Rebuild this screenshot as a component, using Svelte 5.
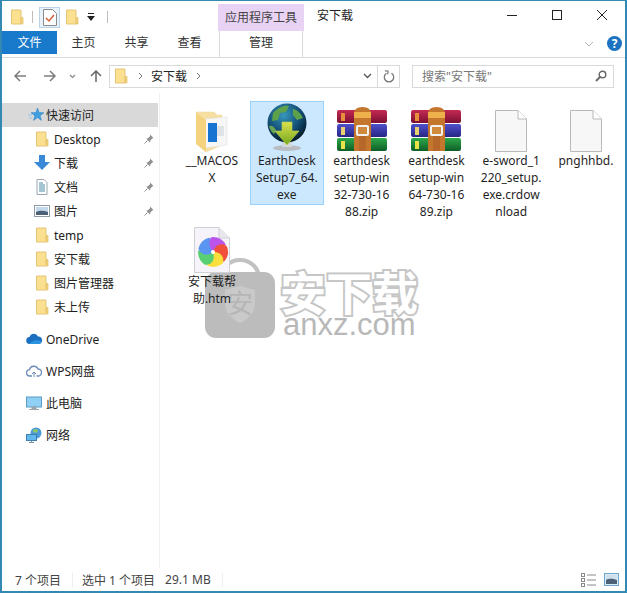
<script>
  const tabs = ["主页", "共享", "查看"];

  const pinned = [
    { name: "Desktop", icon: "folder" },
    { name: "下载", icon: "down" },
    { name: "文档", icon: "doc" },
    { name: "图片", icon: "pic" }
  ];
  const quick = ["temp", "安下载", "图片管理器", "未上传"];

  const items = [
    { icon: "macos", lines: ["__MACOS", "X"] },
    { icon: "globe", lines: ["EarthDesk", "Setup7_64.", "exe"], selected: true },
    { icon: "rar", lines: ["earthdesk", "setup-win", "32-730-16", "88.zip"] },
    { icon: "rar", lines: ["earthdesk", "setup-win", "64-730-16", "89.zip"] },
    { icon: "file", lines: ["e-sword_1", "220_setup.", "exe.crdow", "nload"] },
    { icon: "file", lines: ["pnghhbd."] },
    { icon: "htm", lines: ["安下载帮", "助.htm"] }
  ];

  const petals = ["#bb55ea", "#f0503a", "#fae03c", "#58cf72", "#5a95f2"];
</script>

{#snippet folder()}
  <svg class="ico" width="16" height="16" viewBox="0 0 16 16">
    <path d="M2.500 1h9.500v14H2.500z" fill="#fbe08f" stroke="#e3c577" />
    <path d="M12 8.500h2V15h-2z" fill="#f3cf74" stroke="#e3c577" stroke-width=".8" />
  </svg>
{/snippet}

{#snippet pin()}
  <svg class="pin" width="10" height="10" viewBox="0 0 10 10">
    <path d="M6 .5l3.500 3.500-1.200.6-2 2-.3 1.800L2.200 4.600 4 4.300l2-2z" fill="#8f8f8f" />
    <path d="M3.500 6.500L.5 9.500" stroke="#8f8f8f" />
  </svg>
{/snippet}

{#snippet navicon(kind)}
  {#if kind === "folder"}
    {@render folder()}
  {:else if kind === "down"}
    <svg class="ico" width="16" height="16" viewBox="0 0 16 16">
      <path d="M5 0h6v7h5l-8 8-8-8h5z" fill="#3a88d8" />
    </svg>
  {:else if kind === "doc"}
    <svg class="ico" width="16" height="16" viewBox="0 0 16 16">
      <path d="M3 .5h7l3 3v12H3z" fill="#fff" stroke="#9aa7b2" />
      <path d="M5 4h4M5 6h6M5 8h6M5 10h6M5 12h6" stroke="#4d8aa8" />
    </svg>
  {:else}
    <svg class="ico" width="16" height="16" viewBox="0 0 16 16">
      <rect x=".5" y="2.500" width="15" height="11" fill="#fff" stroke="#8f9aa5" />
      <rect x="2" y="4" width="12" height="8" fill="#c3d8ea" />
      <path d="M2 9c4-2 8-1 12 0v3H2z" fill="#4c6076" />
    </svg>
  {/if}
{/snippet}

{#snippet bigicon(kind)}
  {#if kind === "macos"}
    <svg width="32" height="41" viewBox="0 0 32 41">
      <path d="M0 1h18l3 3h5v30L10 41 0 32z" fill="#f5dfa2" stroke="#eed79a" stroke-width=".5" />
      <path d="M9 8l22-2v28L9 37z" fill="#f6f6f6" stroke="#e2e2e2" stroke-width=".6" />
      <rect x="12" y="12" width="9" height="19" fill="#1673d2" />
      <rect x="21" y="15" width="7" height="10" fill="#dfe3e6" />
      <path d="M0 2l10 7v32L0 33z" fill="#f4d27e" />
    </svg>
  {:else if kind === "globe"}
    <svg width="48" height="50" viewBox="0 0 48 50">
      <defs>
        <radialGradient id="globe-fill" cx=".42" cy=".3" r=".75">
          <stop offset="0" stop-color="#3797bd" />
          <stop offset=".6" stop-color="#124a70" />
          <stop offset="1" stop-color="#031018" />
        </radialGradient>
        <linearGradient id="arrow-fill" x1="0" y1="0" x2="0" y2="1">
          <stop offset="0" stop-color="#dbe04e" />
          <stop offset="1" stop-color="#72a81c" />
        </linearGradient>
      </defs>
      <ellipse cx="24" cy="46" rx="14" ry="3" fill="#b9bdc1" />
      <path d="M19 39h10v6H19z" fill="#d5d8db" />
      <circle cx="24" cy="21" r="19.500" fill="url(#globe-fill)" />
      <path d="M10 11c6-6 11-8 16-7l-3 6-6 1-2 7-6 1zM30 7c5 1 8 5 10 9l-6 2-4-5z" fill="#5da24a" />
      <path d="M6 24c3-1 6 1 7 5l-2 3c-3-2-4-5-5-8z" fill="#6aa456" />
      <path d="M19 20h10v9h7L24 43 12 29h7z" fill="url(#arrow-fill)" stroke="#bfce4c" stroke-width=".6" />
    </svg>
  {:else if kind === "rar"}
    <svg width="50" height="45" viewBox="0 0 50 45">
      <defs>
        <linearGradient id="band-red" x1="0" y1="0" x2="0" y2="1">
          <stop offset="0" stop-color="#c42a52" />
          <stop offset="1" stop-color="#7c0f33" />
        </linearGradient>
        <linearGradient id="band-blue" x1="0" y1="0" x2="0" y2="1">
          <stop offset="0" stop-color="#5050cc" />
          <stop offset="1" stop-color="#262684" />
        </linearGradient>
        <linearGradient id="band-green" x1="0" y1="0" x2="0" y2="1">
          <stop offset="0" stop-color="#2ea84a" />
          <stop offset="1" stop-color="#0d5e26" />
        </linearGradient>
      </defs>
      <rect y="3" width="50" height="13" rx="2" fill="url(#band-red)" />
      <rect y="17" width="50" height="13" rx="2" fill="url(#band-blue)" />
      <rect y="31" width="50" height="13" rx="2" fill="url(#band-green)" />
      <rect x="4" y="6" width="4" height="8" fill="#e88f3c" />
      <rect x="4" y="20" width="4" height="8" fill="#e8cf72" />
      <rect x="4" y="34" width="4" height="8" fill="#e8e24a" />
      <path d="M17 7q0-7 8.500-7T34 7v37H17z" fill="#c4762c" />
      <rect x="17" y="5" width="17" height="6" fill="#eeb04a" />
      <rect x="20" y="19" width="11" height="9" rx="1" fill="#d08a3e" stroke="#f2f2f2" stroke-width="2" />
      <rect x="22" y="29" width="7" height="15" fill="#b5682a" />
    </svg>
  {:else if kind === "file"}
    <svg width="32" height="42" viewBox="0 0 32 42">
      <path d="M.5.500H23L31.500 9v32.500H.500z" fill="#f7f7f7" stroke="#b9b9b9" />
      <path d="M23 .5V9h8.500" fill="#fff" stroke="#b9b9b9" />
    </svg>
  {:else if kind === "htm"}
    <svg width="36" height="46" viewBox="0 0 36 46">
      <path d="M.5.500H25L35.500 11v34.500H.500z" fill="#f6f4fa" stroke="#cfcfd6" />
      <path d="M25 .5V11h10.500" fill="#e8e8ec" stroke="#cfcfd6" />
      {#each petals as color, i}
        <path d="M19 25C13 21 12 14 18 10A15 15 0 0 1 32 18C27 18 22 20 19 25z" fill={color} transform="rotate({i * 72} 19 25)" />
      {/each}
      <circle cx="19" cy="25" r="2" fill="#fff" />
    </svg>
  {/if}
{/snippet}

<div class="window">
  <div class="titlebar">
    <div class="qat">
      {@render folder()}
      <span class="sep"></span>
      <span class="qat-btn">
        <svg width="14" height="17" viewBox="0 0 14 17">
          <path d="M.5.500h9l4 4v12H.500z" fill="#fff" stroke="#8a8a8a" />
          <path d="M3 9l3 3 5-6" fill="none" stroke="#d2603a" stroke-width="1.500" />
        </svg>
      </span>
      {@render folder()}
      <svg class="drop" width="8" height="9" viewBox="0 0 8 9">
        <path d="M1 0h6v1H1zM0 3h8L4 8z" fill="#222" />
      </svg>
      <span class="sep"></span>
    </div>
    <div class="ctx-tab">应用程序工具</div>
    <div class="title">安下载</div>
    <div class="controls">
      <svg width="12" height="12" viewBox="0 0 12 12"><path d="M1 6.500h10" stroke="#222" /></svg>
      <svg width="12" height="12" viewBox="0 0 12 12"><rect x="1.500" y="1.500" width="9" height="9" fill="none" stroke="#222" /></svg>
      <svg width="12" height="12" viewBox="0 0 12 12"><path d="M1 1l10 10M11 1L1 11" stroke="#222" /></svg>
    </div>
  </div>

  <div class="ribbon">
    <div class="file-tab">文件</div>
    {#each tabs as tab}
      <div class="tab">{tab}</div>
    {/each}
    <div class="tab manage">管理</div>
    <svg class="collapse" width="10" height="6" viewBox="0 0 10 6">
      <path d="M1 1l4 4 4-4" fill="none" stroke="#b5b5b5" />
    </svg>
    <div class="help">?</div>
  </div>

  <div class="addressrow">
    <svg class="arrow" width="14" height="14" viewBox="0 0 14 14"><path d="M13 7H2M7 2L2 7l5 5" fill="none" stroke="#7d7d7d" stroke-width="1.500" /></svg>
    <svg class="arrow fwd" width="14" height="14" viewBox="0 0 14 14"><path d="M1 7h11M7 2l5 5-5 5" fill="none" stroke="#7d7d7d" stroke-width="1.500" /></svg>
    <svg class="recent" width="7" height="5" viewBox="0 0 7 5"><path d="M1 1l2.500 2.500L6 1" fill="none" stroke="#888" stroke-width="1.200" /></svg>
    <svg class="arrow up" width="14" height="14" viewBox="0 0 14 14"><path d="M7 13V2M2 7l5-5 5 5" fill="none" stroke="#666" stroke-width="1.500" /></svg>
    <div class="addr">
      {@render folder()}
      <svg class="crumb" width="5" height="8" viewBox="0 0 5 8"><path d="M1 1l3 3-3 3" fill="none" stroke="#777" /></svg>
      <span class="crumb-text">安下载</span>
      <svg class="crumb" width="5" height="8" viewBox="0 0 5 8"><path d="M1 1l3 3-3 3" fill="none" stroke="#777" /></svg>
      <svg class="addr-drop" width="9" height="6" viewBox="0 0 9 6"><path d="M1 1l3.500 3.500L8 1" fill="none" stroke="#555" stroke-width="1.300" /></svg>
      <span class="addr-refresh">
        <svg width="12" height="13" viewBox="0 0 12 13">
          <path d="M8.500 3.200A4.700 4.700 0 1 1 3.500 3.200" fill="none" stroke="#777" stroke-width="1.300" />
          <path d="M2 0.800l3 .2-.2 3.200" fill="none" stroke="#777" stroke-width="1.200" />
        </svg>
      </span>
    </div>
    <div class="search">
      <span>搜索"安下载"</span>
      <svg width="12" height="12" viewBox="0 0 12 12">
        <circle cx="7.500" cy="4.500" r="3.300" fill="none" stroke="#666" stroke-width="1.400" />
        <path d="M5 7l-4 4" stroke="#666" stroke-width="1.800" />
      </svg>
    </div>
  </div>

  <div class="main">
    <nav class="sidebar">
      <div class="row head">
        <svg class="ico" width="16" height="16" viewBox="0 0 16 16">
          <path d="M9.500 1l1.600 4.600 4.900.1-3.900 3 1.400 4.700-4-2.800-4 2.800 1.400-4.700-3.900-3 4.900-.1z" fill="#3f9fe0" stroke="#2b7fc0" stroke-width=".5" />
          <path d="M0 8h4M1 11h3" stroke="#8cc3ea" />
        </svg>
        <span>快速访问</span>
      </div>
      {#each pinned as item}
        <div class="row sub">
          {@render navicon(item.icon)}
          <span>{item.name}</span>
          {@render pin()}
        </div>
      {/each}
      {#each quick as name}
        <div class="row sub">
          {@render folder()}
          <span>{name}</span>
        </div>
      {/each}

      <div class="row top">
        <svg class="ico" width="16" height="16" viewBox="0 0 16 16">
          <path d="M4 13a3.500 3.500 0 0 1-.5-7A4.500 4.500 0 0 1 12 5.500 3.500 3.500 0 0 1 12.500 13z" fill="#1a6fc0" />
          <path d="M3 13c3-3 7-5 12-3 1 2 0 3-2.500 3z" fill="#2c93e0" />
        </svg>
        <span>OneDrive</span>
      </div>
      <div class="row top">
        <svg class="ico" width="16" height="16" viewBox="0 0 16 16">
          <path d="M4 13a3.200 3.200 0 0 1-.5-6.400A4.500 4.500 0 0 1 12 6a3.500 3.500 0 0 1 0 7h-1.500M6 13H4" fill="none" stroke="#6d8db8" stroke-width="1.300" />
          <path d="M8 9v5M6 11l2-2 2 2" fill="none" stroke="#6d8db8" />
        </svg>
        <span>WPS网盘</span>
      </div>
      <div class="row top">
        <svg class="ico" width="16" height="16" viewBox="0 0 16 16">
          <rect x=".5" y="2" width="15" height="10" fill="#8fd0f4" stroke="#5c9cc4" />
          <path d="M6 12h4v2H6zM3 14.500h10" fill="#9aa5ad" stroke="#9aa5ad" />
        </svg>
        <span>此电脑</span>
      </div>
      <div class="row top">
        <svg class="ico" width="16" height="16" viewBox="0 0 16 16">
          <circle cx="10" cy="6" r="5.500" fill="#4a9bd8" />
          <path d="M7 3c2-2 5-1 5 1s-3 2-5 1z" fill="#8cc46a" />
          <rect x=".5" y="7.500" width="10" height="6" fill="#5fb7ec" stroke="#3c7fb0" />
          <path d="M5.500 14v2M3 15.500h5" stroke="#7a95a8" />
        </svg>
        <span>网络</span>
      </div>
    </nav>

    <div class="files">
      {#each items as item}
        <div class="item" class:selected={item.selected}>
          <div class="icon">{@render bigicon(item.icon)}</div>
          {#each item.lines as line}
            <div class="line">{line}</div>
          {/each}
        </div>
      {/each}
    </div>

    <div class="watermark">
      <div class="bag">
        <svg width="70" height="80" viewBox="0 0 70 80">
          <path d="M16 16V20a19 18 0 0 1 38 0v-4" fill="none" stroke="#c2c2c2" stroke-width="4" />
          <rect y="14" width="70" height="66" rx="11" fill="#bcbcbc" />
          <path d="M35 28l15 4v14c0 9-7 15-15 19-8-4-15-10-15-19V32z" fill="#c9c9c9" />
        </svg>
        <span class="shield-text">安</span>
      </div>
      <div class="wm-text">
        <div class="wm-cn">安下载</div>
        <div class="wm-en">anxz.com</div>
      </div>
    </div>
  </div>

  <div class="status">
    <span>7 个项目</span>
    <span class="bar"></span>
    <span>选中 1 个项目</span>
    <span class="size">29.1 MB</span>
    <span class="bar"></span>
    <svg class="view-a" width="16" height="14" viewBox="0 0 16 14">
      <rect x=".5" y=".5" width="3" height="3" fill="#fff" stroke="#8a8a8a" />
      <rect x=".5" y="5.500" width="3" height="3" fill="#fff" stroke="#8a8a8a" />
      <rect x=".5" y="10.500" width="3" height="3" fill="#fff" stroke="#8a8a8a" />
      <path d="M6 2h9M6 7h9M6 12h9" stroke="#8a8a8a" />
    </svg>
    <svg class="view-b" width="15" height="13" viewBox="0 0 15 13">
      <rect x=".5" y=".5" width="14" height="12" fill="#d9ebf7" stroke="#6fa7cc" />
      <rect x="2" y="2" width="11" height="9" fill="#cfe0ec" />
      <path d="M2 7c4-2 7-1 11 0v4H2z" fill="#4c6076" />
    </svg>
  </div>
</div>

<style>
  :global(body) {
    background: #fff;
  }
  .window {
    box-sizing: border-box;
    width: 627px;
    height: 593px;
    display: flex;
    flex-direction: column;
    border: 2px solid #3489b2;
    border-top-width: 1px;
    background: #fff;
    overflow: hidden;
    font-family: "Noto Sans", "Noto Sans CJK SC", sans-serif;
    font-size: 12px;
    color: #222;
  }
  .ico {
    flex: none;
  }

  .titlebar {
    height: 30px;
    display: flex;
    align-items: flex-start;
    flex: none;
  }
  .qat {
    display: flex;
    align-items: center;
    height: 22px;
    margin-top: 5px;
    padding-left: 7px;
    width: 209px;
    flex: none;
  }
  .sep {
    width: 1px;
    height: 12px;
    background: #bdbdbd;
    margin: 0 6px 0 7px;
  }
  .qat-btn {
    width: 21px;
    height: 21px;
    box-sizing: border-box;
    display: flex;
    align-items: center;
    justify-content: center;
    background: #e8f2fa;
    border: 1px solid #bcd3e6;
    margin-right: 4px;
  }
  .drop {
    margin: 0 5px 0 7px;
  }
  .ctx-tab {
    width: 86px;
    height: 27px;
    margin-top: 3px;
    background: #e9d3f4;
    text-align: center;
    line-height: 28px;
    color: #444;
    flex: none;
  }
  .title {
    margin-left: 13px;
    line-height: 29px;
    flex: 1;
  }
  .controls {
    display: flex;
    gap: 33px;
    padding: 8px 17px 0 0;
  }

  .ribbon {
    height: 26px;
    flex: none;
    display: flex;
    align-items: flex-start;
    border-bottom: 1px solid #dadada;
  }
  .file-tab {
    width: 55px;
    height: 23px;
    background: #1979ca;
    color: #fff;
    text-align: center;
    line-height: 23px;
  }
  .tab {
    width: 53px;
    height: 23px;
    text-align: center;
    line-height: 24px;
    color: #333;
  }
  .manage {
    width: 84px;
    margin-left: 3px;
    height: 26px;
    box-sizing: border-box;
    border-left: 1px solid #dadada;
    border-right: 1px solid #dadada;
    background: #fff;
    margin-bottom: -1px;
    flex: none;
  }
  .collapse {
    margin: 10px 0 0 auto;
  }
  .help {
    width: 15px;
    height: 15px;
    border-radius: 50%;
    background: #1a72c0;
    color: #fff;
    font-weight: 700;
    font-size: 12px;
    text-align: center;
    line-height: 15px;
    margin: 5px 3px 0 13px;
  }

  .addressrow {
    height: 35px;
    flex: none;
    display: flex;
    align-items: center;
    padding-left: 11px;
    box-sizing: border-box;
    padding-top: 1px;
  }
  .fwd {
    margin-left: 16px;
  }
  .recent {
    margin-left: 12px;
  }
  .up {
    margin-left: 13px;
  }
  .addr {
    box-sizing: border-box;
    width: 291px;
    height: 23px;
    margin-left: 6px;
    border: 1px solid #d9d9d9;
    display: flex;
    align-items: center;
    padding-left: 3px;
  }
  .crumb {
    margin: 0 8px 0 9px;
    flex: none;
  }
  .crumb-text {
    color: #222;
  }
  .addr-drop {
    margin-left: auto;
    margin-right: 5px;
  }
  .addr-refresh {
    width: 21px;
    height: 21px;
    border-left: 1px solid #d9d9d9;
    display: flex;
    align-items: center;
    justify-content: center;
  }
  .search {
    box-sizing: border-box;
    width: 202px;
    height: 23px;
    margin-left: 12px;
    border: 1px solid #d9d9d9;
    display: flex;
    align-items: center;
    justify-content: space-between;
    padding: 0 6px 0 9px;
    color: #777;
  }

  .main {
    flex: 1;
    min-height: 0;
    display: flex;
    position: relative;
  }
  .sidebar {
    width: 156px;
    margin-right: 1px;
    flex: none;
    padding-top: 10px;
    border-right: 1px solid #f0f0f0;
    box-sizing: content-box;
    padding-right: 1px;
  }
  .row {
    height: 24px;
    display: flex;
    align-items: center;
    white-space: nowrap;
  }
  .head {
    background: #d9d9d9;
    padding-left: 26px;
    gap: 2px;
  }
  .sub {
    padding-left: 32px;
    gap: 4px;
    position: relative;
  }
  .pin {
    position: absolute;
    left: 142px;
    top: 7px;
  }
  .top {
    margin-top: 8px;
    padding-left: 24px;
    gap: 4px;
  }

  .files {
    display: grid;
    grid-template-columns: repeat(6, 74.8px);
    grid-auto-rows: 121px;
    padding: 8px 0 0 14px;
    align-content: start;
    position: relative;
    z-index: 1;
  }
  .item {
    box-sizing: border-box;
    width: 74px;
    height: 104px;
    border: 1px solid transparent;
    text-align: center;
    line-height: 17px;
    color: #1f1f1f;
    white-space: nowrap;
  }
  .selected {
    background: #cce8ff;
    border-color: #99d1ff;
  }
  .icon {
    height: 50px;
    display: flex;
    align-items: flex-end;
    justify-content: center;
  }

  .watermark {
    position: absolute;
    left: 203px;
    top: 165px;
    display: flex;
    pointer-events: none;
  }
  .bag {
    position: relative;
    width: 70px;
    height: 80px;
  }
  .bag svg {
    display: block;
  }
  .shield-text {
    position: absolute;
    left: 22px;
    top: 29px;
    font-size: 26px;
    line-height: 32px;
    color: #b5b5b5;
  }
  .wm-text {
    margin-left: 5px;
    margin-top: 11px;
  }
  .wm-cn {
    font-size: 46px;
    line-height: 46px;
    font-weight: 700;
    color: #fff;
    -webkit-text-stroke: 4px #c6c6c6;
    paint-order: stroke fill;
    white-space: nowrap;
  }
  .wm-en {
    font-family: "Liberation Sans", sans-serif;
    font-size: 31px;
    line-height: 24px;
    margin: -2px 0 0 3px;
    color: #b8b8b8;
  }

  .status {
    height: 23px;
    flex: none;
    display: flex;
    align-items: center;
    padding-left: 13px;
    color: #444;
    white-space: nowrap;
  }
  .bar {
    width: 1px;
    height: 14px;
    background: #eee;
    margin: 0 9px 0 11px;
  }
  .size {
    margin-left: 10px;
  }
  .view-a {
    margin-left: auto;
  }
  .view-b {
    margin: 0 6px 0 7px;
  }
</style>
